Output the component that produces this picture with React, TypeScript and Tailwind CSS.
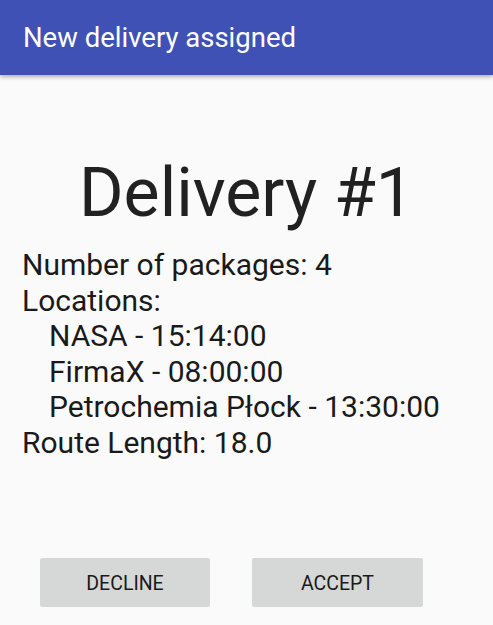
import React from "react";

export default function App() {
  const font = { fontFamily: "Roboto, 'Noto Sans', sans-serif" };
  return (
    <div className="h-[625px] w-full bg-[#FAFAFA] flex flex-col overflow-hidden" style={font}>
      <div className="h-[75px] shrink-0 bg-[#3F51B5] flex items-center pl-[23px] shadow-[0_2px_4px_rgba(0,0,0,0.3)] relative z-10">
        <span className="text-white text-[27.5px] leading-none">New delivery assigned</span>
      </div>
      <div className="pt-[78px] text-center text-[#212121] text-[68px] leading-[80px]">Delivery #1</div>
      <div className="mt-[14px] px-[22px] text-[#1a1a1a] text-[30px] leading-[35.5px]">
        <div>Number of packages: 4</div>
        <div>Locations:</div>
        <div className="pl-[27px]">NASA - 15:14:00</div>
        <div className="pl-[27px]">FirmaX - 08:00:00</div>
        <div className="pl-[27px]">Petrochemia Płock - 13:30:00</div>
        <div>Route Length: 18.0</div>
      </div>
      <div className="mt-auto mb-[18px] flex pl-[40px] gap-[42px]">
        <button className="w-[170px] h-[49px] pt-[3px] bg-[#D6D7D7] rounded-[2px] text-[19.5px] text-[#1a1a1a]">DECLINE</button>
        <button className="w-[171px] h-[49px] pt-[3px] bg-[#D6D7D7] rounded-[2px] text-[19.5px] text-[#1a1a1a]">ACCEPT</button>
      </div>
    </div>
  );
}
